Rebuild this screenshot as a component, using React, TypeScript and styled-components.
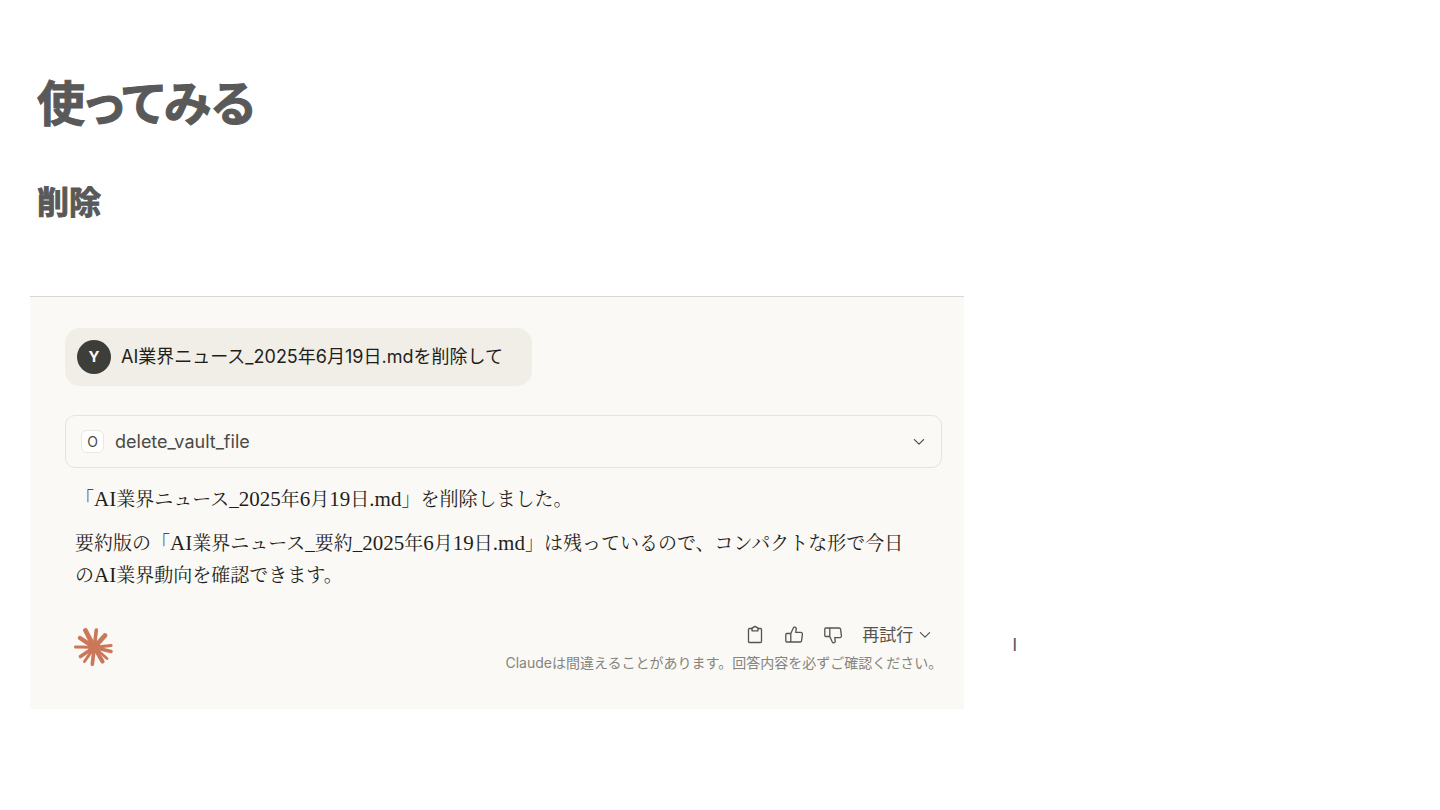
import React from "react";
import styled, { createGlobalStyle } from "styled-components";

const sans = '"Inter", "Noto Sans CJK JP", sans-serif';
const serif = '"Liberation Serif", "Noto Serif CJK JP", "Noto Sans CJK JP", serif';

const GlobalStyle = createGlobalStyle`
  *, *::before, *::after { box-sizing: border-box; }
  body { margin: 0; background: #fff; color: #595959; font-family: ${sans}; }
  h1, h2, p { margin: 0; }
  button { font: inherit; color: inherit; background: none; border: 0; padding: 0; cursor: pointer; }
`;

const Slide = styled.main`
  padding: 64px 30px 40px;
`;

const Title = styled.h1`
  padding-left: 7px;
  font: 700 48px/72px "Noto Sans CJK JP", sans-serif;
  font-feature-settings: "palt";
  -webkit-text-stroke: 1px currentColor;
`;

const Subtitle = styled.h2`
  margin-top: 40px;
  padding-left: 7px;
  font: 700 32px/48px "Noto Sans CJK JP", sans-serif;
  -webkit-text-stroke: 1px currentColor;
`;

const Columns = styled.div`
  display: grid;
  grid-template-columns: minmax(0, 44fr) minmax(0, 21fr);
  margin-top: 72px;
`;

const Chat = styled.section`
  display: flex;
  flex-direction: column;
  align-items: flex-start;
  padding: 31px 22px 34px 35px;
  border-top: 1px solid #d8d7d4;
  background: #faf9f5;
`;

const Bubble = styled.div`
  display: flex;
  align-items: center;
  gap: 10px;
  min-height: 58px;
  padding: 12px 29px 12px 12px;
  border-radius: 15px;
  background: #f0eee6;
  color: #1f1e1c;
  font-size: 18px;
  line-height: 28px;
`;

const Avatar = styled.span`
  display: grid;
  place-items: center;
  width: 34px;
  height: 34px;
  border-radius: 50%;
  background: #3d3d3a;
  color: #faf9f5;
  font-size: 15px;
  font-weight: 700;
`;

const ToolCall = styled.button`
  display: flex;
  align-items: center;
  gap: 11px;
  width: 100%;
  height: 53px;
  margin-top: 29px;
  && { padding: 0 16px 0 15px; border: 1px solid #e5e4df; font-size: 18px; }
  border-radius: 10px;
  color: #4a4a46;
  text-align: left;
`;

const ToolBadge = styled.span`
  display: grid;
  place-items: center;
  width: 23px;
  height: 23px;
  border: 1px solid #e8e7e2;
  border-radius: 6px;
  background: #fff;
  font-size: 14px;
`;

const ToolName = styled.span`
  flex: 1;
`;

const Answer = styled.div`
  display: grid;
  gap: 12px;
  padding: 16px 10px 0;
  color: #1f1e1c;
  font-family: ${serif};
  font-size: 19px;
  line-height: 32px;
`;

const Latin = styled.span`
  font-size: 21px;
  line-height: 24px;
`;

const Footer = styled.footer`
  display: flex;
  align-items: center;
  justify-content: space-between;
  width: 100%;
  margin-top: 31px;
  padding: 0 0 0 8px;
`;

const FooterInfo = styled.div`
  display: grid;
  justify-items: end;
  gap: 4px;
`;

const Actions = styled.div`
  display: flex;
  align-items: center;
  gap: 19px;
  padding-right: 11px;
  color: #55544f;
`;

const IconButton = styled.button`
  display: grid;
  width: 20px;
  height: 20px;
`;

const RetryButton = styled.button`
  display: flex;
  align-items: center;
  gap: 6px;
  && { font-size: 17px; line-height: 24px; }
`;

const Notice = styled.p`
  color: #85847e;
  font-size: 14px;
  line-height: 24px;
`;

const SideNote = styled.p`
  align-self: end;
  padding: 0 0 54px 48px;
  font: 18px/20px "Liberation Sans", sans-serif;
`;

const Mark = styled.svg`
  margin-bottom: 5px;
`;

const Chevron = () => (
  <svg width="12" height="12" viewBox="0 0 12 12" fill="none" stroke="currentColor" strokeWidth="1.2" strokeLinecap="round" strokeLinejoin="round" aria-hidden="true">
    <path d="M1.4 3.6 6 8.2l4.6-4.6" />
  </svg>
);

const Icon = ({ children }: { children: React.ReactNode }) => (
  <svg width="20" height="20" viewBox="0 0 20 20" fill="none" stroke="currentColor" strokeWidth="1.3" strokeLinejoin="round" strokeLinecap="round" aria-hidden="true">
    {children}
  </svg>
);

const Thumb = () => (
  <path d="M6.8 8.5V17M2.8 8.5h4L9.3 3c.3-.6.8-.9 1.4-.8 1.2.2 1.7 1 1.5 2.200l-.5 2.900h5.100c1 0 1.700.8 1.600 1.800l-.8 6.500c-.1.800-.7 1.400-1.600 1.400H2.800c-.6 0-1-.4-1-1V9.500c0-.6.4-1 1-1z" />
);

// End point and thickness of each ray, clockwise from the top left.
const rays: [number, number, number][] = [
  [12.5, 3.5, 4.8],
  [23.3, 3, 3.6],
  [32, 8.5, 4.8],
  [38, 18.5, 3.2],
  [38, 24.5, 3.4],
  [34, 31.5, 2.8],
  [29.5, 34.5, 4.2],
  [19.3, 37.3, 3.6],
  [11.5, 34.5, 3],
  [7.5, 29.5, 3.6],
  [2.5, 20, 3],
  [7, 11, 4.4],
];

const Starburst = () => (
  <Mark width="40" height="40" viewBox="0 0 40 40" stroke="#cb775a" strokeLinecap="round" role="img" aria-label="Claude">
    {rays.map(([x, y, w]) => (
      <path key={`${x}-${y}`} d={`M21.3 20.3 ${x} ${y}`} strokeWidth={w} />
    ))}
    <circle cx="21.3" cy="20.3" r="6" fill="#cb775a" stroke="none" />
  </Mark>
);

export default function App() {
  return (
    <>
      <GlobalStyle />
      <Slide lang="ja">
        <Title>使ってみる</Title>
        <Subtitle>削除</Subtitle>
        <Columns>
          <Chat>
            <Bubble>
              <Avatar>Y</Avatar>
              <span>AI業界ニュース_2025年6月19日.mdを削除して</span>
            </Bubble>
            <ToolCall type="button">
              <ToolBadge>O</ToolBadge>
              <ToolName>delete_vault_file</ToolName>
              <Chevron />
            </ToolCall>
            <Answer>
              <p>
                「<Latin>AI</Latin>業界ニュース_<Latin>2025</Latin>年<Latin>6</Latin>月<Latin>19</Latin>日<Latin>.md</Latin>」を削除しました。
              </p>
              <p>
                要約版の「<Latin>AI</Latin>業界ニュース_要約_<Latin>2025</Latin>年<Latin>6</Latin>月<Latin>19</Latin>日<Latin>.md</Latin>」は残っているので、コンパクトな形で今日
                <br />
                の<Latin>AI</Latin>業界動向を確認できます。
              </p>
            </Answer>
            <Footer>
              <Starburst />
              <FooterInfo>
                <Actions>
                  <IconButton type="button" aria-label="コピー">
                    <Icon>
                      <path d="M7 3.5H4.500c-.6 0-1 .4-1 1v12c0 .6.4 1 1 1h11c.6 0 1-.4 1-1v-12c0-.6-.4-1-1-1H13" />
                      <path d="M7 3.5c0-.6.4-1 1-1h.5c.3-.6.8-1 1.500-1s1.200.4 1.500 1h.5c.6 0 1 .4 1 1v2.300H7z" />
                    </Icon>
                  </IconButton>
                  <IconButton type="button" aria-label="良い回答">
                    <Icon><Thumb /></Icon>
                  </IconButton>
                  <IconButton type="button" aria-label="悪い回答">
                    <Icon><g transform="translate(0 20) scale(1 -1)"><Thumb /></g></Icon>
                  </IconButton>
                  <RetryButton type="button">
                    再試行
                    <Chevron />
                  </RetryButton>
                </Actions>
                <Notice>Claudeは間違えることがあります。回答内容を必ずご確認ください。</Notice>
              </FooterInfo>
            </Footer>
          </Chat>
          <SideNote>I</SideNote>
        </Columns>
      </Slide>
    </>
  );
}
